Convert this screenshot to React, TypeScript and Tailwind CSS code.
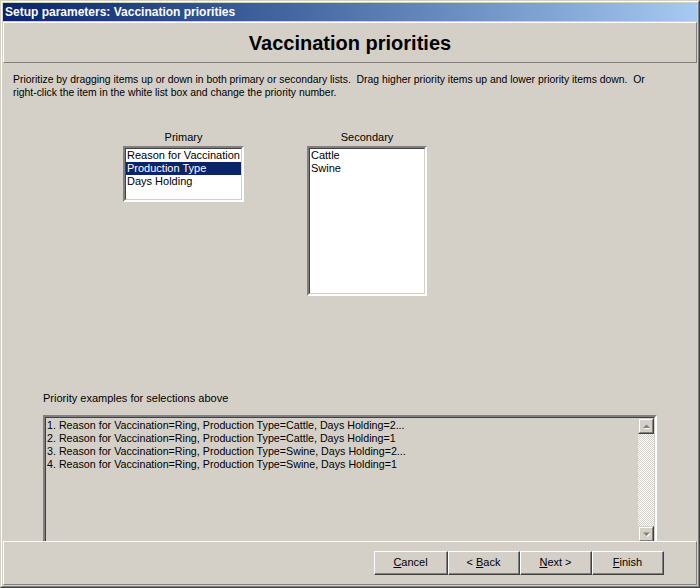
import React from "react";

function Btn({ w, children }: { w: string; children: React.ReactNode }) {
  return (
    <div className={`${w} h-[24px] border border-t-white border-l-white border-r-[#404040] border-b-[#404040]`}>
      <div className="h-full border-r border-b border-r-[#808080] border-b-[#808080] flex items-center justify-center text-[11px] text-black leading-none">
        {children}
      </div>
    </div>
  );
}

function Sunken({ className, inner, children }: { className: string; inner: string; children?: React.ReactNode }) {
  return (
    <div className={`${className} border-2 border-t-[#808080] border-l-[#808080] border-r-white border-b-white`}>
      <div className={`h-full w-full border border-t-[#404040] border-l-[#404040] border-r-[#d4d0c8] border-b-[#d4d0c8] ${inner}`}>
        {children}
      </div>
    </div>
  );
}

function Arrow({ up }: { up: boolean }) {
  return (
    <div className="w-[16px] h-[16px] bg-[#d4d0c8] border border-t-[#d4d0c8] border-l-[#d4d0c8] border-r-[#404040] border-b-[#404040] shrink-0">
      <div className="w-full h-full border border-t-white border-l-white border-r-[#808080] border-b-[#808080] flex items-center justify-center">
        <svg width="7" height="5" viewBox="0 0 7 5">
          {up ? (
            <>
              <polygon points="1,5 7,5 4,2" fill="#ffffff" />
              <polygon points="0,4 7,4 3.5,0.5" fill="#808080" />
            </>
          ) : (
            <>
              <polygon points="1,1 8,1 4.5,5" fill="#ffffff" />
              <polygon points="0,0.5 7,0.5 3.5,4" fill="#808080" />
            </>
          )}
        </svg>
      </div>
    </div>
  );
}

export default function App() {
  const examples = [
    "1. Reason for Vaccination=Ring, Production Type=Cattle, Days Holding=2...",
    "2. Reason for Vaccination=Ring, Production Type=Cattle, Days Holding=1",
    "3. Reason for Vaccination=Ring, Production Type=Swine, Days Holding=2...",
    "4. Reason for Vaccination=Ring, Production Type=Swine, Days Holding=1",
  ];
  return (
    <div className="w-[700px] h-[588px] bg-[#d4d0c8] border border-t-[#d4d0c8] border-l-[#d4d0c8] border-r-[#404040] border-b-[#404040] font-['Liberation_Sans',Arial,sans-serif] text-black overflow-hidden">
      <div className="h-full border border-t-white border-l-white border-r-[#808080] border-b-[#808080] p-px flex flex-col">
        {/* title bar */}
        <div className="h-[18px] shrink-0 bg-gradient-to-r from-[#0a246a] to-[#a6caf0] flex items-center pl-[2px]">
          <span className="text-white font-bold text-[12px] leading-none">Setup parameters: Vaccination priorities</span>
        </div>
        {/* header */}
        <div className="mt-px h-[41px] shrink-0 border border-t-white border-l-white border-r-[#808080] border-b-[#808080] flex items-center justify-center">
          <span className="font-bold text-[20px] leading-none">Vaccination priorities</span>
        </div>
        {/* content */}
        <div className="h-[478px] shrink-0 overflow-hidden flex flex-col">
          <div className="mt-[10px] pl-[10px] text-[10.4px] leading-[13px] whitespace-pre">
            <div>Prioritize by dragging items up or down in both primary or secondary lists.  Drag higher priority items up and lower priority items down.  Or</div>
            <div>right-click the item in the white list box and change the priority number.</div>
          </div>
          <div className="mt-[32px] flex pl-[120px] gap-[63px] h-[165px]">
            <div className="flex flex-col w-[121px]">
              <div className="text-[11px] leading-[13px] text-center">Primary</div>
              <Sunken className="mt-[2px] h-[56px]" inner="bg-white">
                <div className="text-[11px] leading-[13px] whitespace-nowrap overflow-hidden">
                  <div className="pl-[1px]">Reason for Vaccination</div>
                  <div className="pl-[1px] bg-[#0a246a] text-white">Production Type</div>
                  <div className="pl-[1px]">Days Holding</div>
                </div>
              </Sunken>
            </div>
            <div className="flex flex-col w-[120px]">
              <div className="text-[11px] leading-[13px] text-center">Secondary</div>
              <Sunken className="mt-[2px] h-[150px]" inner="bg-white">
                <div className="text-[11px] leading-[13px] pl-[1px]">
                  <div>Cattle</div>
                  <div>Swine</div>
                </div>
              </Sunken>
            </div>
          </div>
          <div className="mt-[96px] pl-[40px] text-[11px] leading-[13px]">Priority examples for selections above</div>
          <div className="mt-[10px] pl-[40px]">
            <Sunken className="w-[614px] h-[130px]" inner="bg-[#d4d0c8] flex">
              <div className="flex-1 text-[10.7px] leading-[13px] pl-[1px] pt-[1px] whitespace-nowrap overflow-hidden">
                {examples.map((e) => (
                  <div key={e}>{e}</div>
                ))}
              </div>
              <div className="w-[16px] h-[124px] flex flex-col bg-[image:repeating-conic-gradient(#ffffff_0%_25%,#d4d0c8_0%_50%)] bg-[length:2px_2px]">
                <Arrow up={true} />
                <div className="flex-1" />
                <Arrow up={false} />
              </div>
            </Sunken>
          </div>
        </div>
        {/* bottom panel */}
        <div className="flex-1 border border-t-white border-l-white border-r-[#808080] border-b-[#808080] flex justify-end pr-[32px] pt-[9px]">
          <div className="flex h-[24px]">
            <Btn w="w-[74px]">
              <span><u>C</u>ancel</span>
            </Btn>
            <Btn w="w-[72px]">
              <span>&lt; <u>B</u>ack</span>
            </Btn>
            <Btn w="w-[72px]">
              <span><u>N</u>ext &gt;</span>
            </Btn>
            <Btn w="w-[72px]">
              <span><u>F</u>inish</span>
            </Btn>
          </div>
        </div>
      </div>
    </div>
  );
}
